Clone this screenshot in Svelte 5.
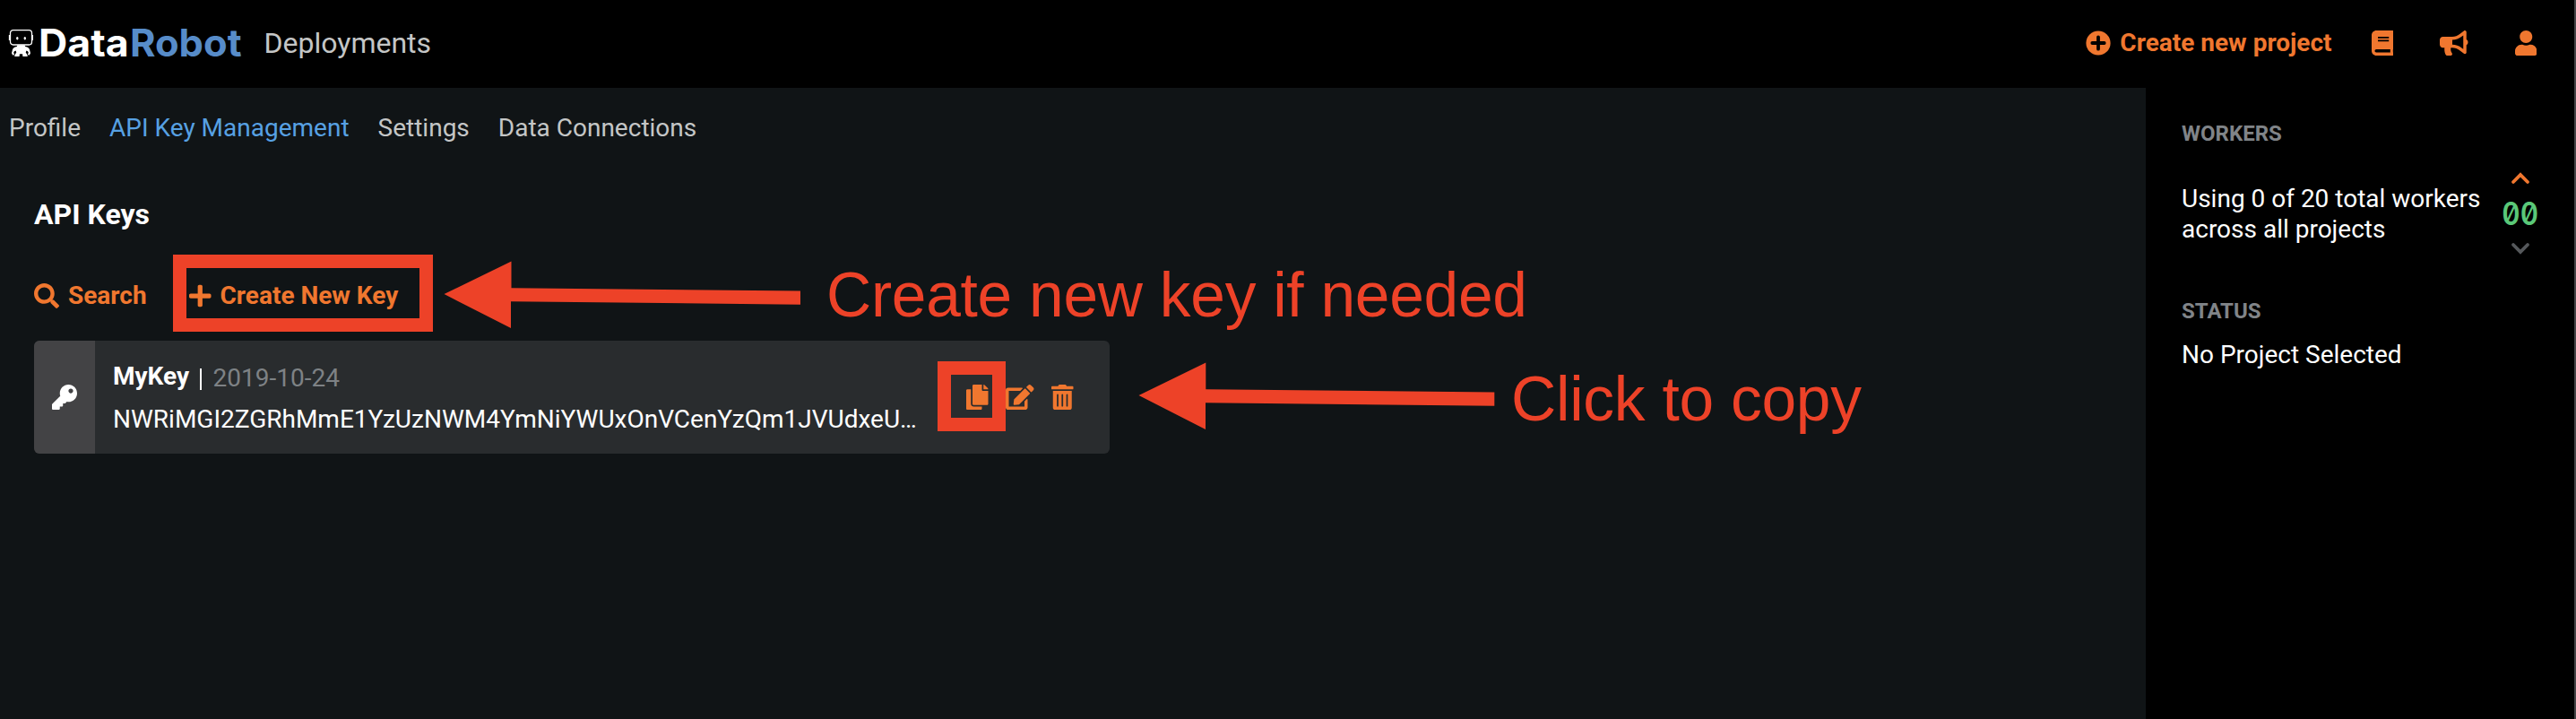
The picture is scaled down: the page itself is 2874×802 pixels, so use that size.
<script>
  const tabs = ['Profile', 'API Key Management', 'Settings', 'Data Connections'];
  const active = 'API Key Management';

  const icons = {
    book: { w: 448, d: 'M448 360V24c0-13.3-10.7-24-24-24H96C43 0 0 43 0 96v320c0 53 43 96 96 96h328c13.3 0 24-10.7 24-24v-16c0-7.5-3.5-14.3-8.9-18.7-4.2-15.4-4.2-59.3 0-74.7 5.4-4.3 8.9-11.1 8.9-18.6zM128 134c0-3.3 2.7-6 6-6h212c3.3 0 6 2.7 6 6v20c0 3.3-2.7 6-6 6H134c-3.3 0-6-2.7-6-6v-20zm0 64c0-3.3 2.7-6 6-6h212c3.3 0 6 2.7 6 6v20c0 3.3-2.7 6-6 6H134c-3.3 0-6-2.7-6-6v-20zm253.4 250H96c-17.7 0-32-14.3-32-32 0-17.6 14.4-32 32-32h285.4c-1.9 17.1-1.9 46.9 0 64z' },
    bullhorn: { w: 576, d: 'M576 240c0-23.63-12.95-44.04-32-55.12V32.01C544 23.26 537.02 0 512 0c-7.12 0-14.19 2.38-19.98 7.02l-85.03 68.03C364.28 109.19 310.66 128 256 128H64c-35.35 0-64 28.65-64 64v96c0 35.35 28.65 64 64 64h33.7c-1.39 10.48-2.18 21.14-2.18 32 0 39.77 9.26 77.35 25.56 110.94 5.19 10.69 16.52 17.06 28.4 17.06h74.28c26.05 0 41.69-29.84 25.9-50.56-16.4-21.52-26.15-48.36-26.15-77.44 0-11.11 1.62-21.79 4.41-32H256c54.66 0 108.28 18.81 150.98 52.95l85.03 68.03a32.023 32.023 0 0 0 19.98 7.02c24.92 0 32-22.78 32-32V295.13C563.05 284.04 576 263.63 576 240zm-96 141.42l-33.05-26.44C392.95 311.78 325.12 288 256 288v-96c69.12 0 136.95-23.78 190.95-66.98L480 98.58v282.84z' },
    user: { w: 448, d: 'M224 256c70.7 0 128-57.3 128-128S294.7 0 224 0 96 57.3 96 128s57.3 128 128 128zm89.6 32h-16.7c-22.2 10.2-46.9 16-72.9 16s-50.6-5.8-72.9-16h-16.7C60.2 288 0 348.2 0 422.4V464c0 26.5 21.5 48 48 48h352c26.5 0 48-21.5 48-48v-41.6c0-74.2-60.2-134.4-134.4-134.4z' },
    search: { w: 512, d: 'M505 442.7L405.3 343c-4.5-4.5-10.6-7-17-7H372c27.6-35.3 44-79.7 44-128C416 93.1 322.9 0 208 0S0 93.1 0 208s93.1 208 208 208c48.3 0 92.7-16.4 128-44v16.3c0 6.4 2.5 12.5 7 17l99.7 99.7c9.4 9.4 24.6 9.4 33.9 0l28.3-28.3c9.4-9.4 9.4-24.6.1-34zM208 336c-70.7 0-128-57.2-128-128 0-70.7 57.2-128 128-128 70.7 0 128 57.2 128 128 0 70.7-57.2 128-128 128z' },
    plus: { w: 448, d: 'M416 208H272V64c0-17.67-14.33-32-32-32h-32c-17.67 0-32 14.33-32 32v144H32c-17.67 0-32 14.33-32 32v32c0 17.67 14.33 32 32 32h144v144c0 17.67 14.33 32 32 32h32c17.67 0 32-14.33 32-32V304h144c17.67 0 32-14.33 32-32v-32c0-17.67-14.33-32-32-32z' },
    key: { w: 512, d: 'M512 176.001C512 273.203 433.202 352 336 352c-11.22 0-22.19-1.062-32.827-3.069l-24.012 27.014A23.999 23.999 0 0 1 261.223 384H224v40c0 13.255-10.745 24-24 24h-40v40c0 13.255-10.745 24-24 24H24c-13.255 0-24-10.745-24-24v-78.059c0-6.365 2.529-12.47 7.029-16.971l161.802-161.802C163.108 213.814 160 195.271 160 176 160 78.798 238.797.001 335.999 0 433.488-.001 512 78.511 512 176.001zM336 128c0 26.51 21.49 48 48 48s48-21.49 48-48-21.49-48-48-48-48 21.49-48 48z' },
    copy: { w: 448, d: 'M320 448v40c0 13.255-10.745 24-24 24H24c-13.255 0-24-10.745-24-24V120c0-13.255 10.745-24 24-24h72v296c0 30.879 25.121 56 56 56h168zm0-344V0H152c-13.255 0-24 10.745-24 24v368c0 13.255 10.745 24 24 24h272c13.255 0 24-10.745 24-24V128H344c-13.2 0-24-10.8-24-24zm120.971-31.029L375.029 7.029A24 24 0 0 0 358.059 0H352v96h96v-6.059a24 24 0 0 0-7.029-16.97z' },
    edit: { w: 576, d: 'M402.6 83.2l90.2 90.2c3.8 3.8 3.8 10 0 13.8L274.4 405.6l-92.8 10.3c-12.4 1.4-22.9-9.1-21.5-21.5l10.3-92.8L388.8 83.2c3.8-3.8 10-3.8 13.8 0zm162-22.9l-48.8-48.8c-15.2-15.2-39.9-15.2-55.2 0l-35.4 35.4c-3.8 3.8-3.8 10 0 13.8l90.2 90.2c3.8 3.8 10 3.8 13.8 0l35.4-35.4c15.2-15.3 15.2-40 0-55.2zM384 346.2V448H64V128h229.8c3.2 0 6.2-1.3 8.5-3.5l40-40c7.6-7.6 2.2-20.5-8.5-20.5H48C21.5 64 0 85.5 0 112v352c0 26.5 21.5 48 48 48h352c26.5 0 48-21.5 48-48V306.2c0-10.7-12.9-16-20.5-8.5l-40 40c-2.2 2.3-3.5 5.3-3.5 8.5z' },
    trash: { w: 448, d: 'M32 464a48 48 0 0 0 48 48h288a48 48 0 0 0 48-48V128H32zm272-256a16 16 0 0 1 32 0v224a16 16 0 0 1-32 0zm-96 0a16 16 0 0 1 32 0v224a16 16 0 0 1-32 0zm-96 0a16 16 0 0 1 32 0v224a16 16 0 0 1-32 0zM432 32H312l-9.4-18.7A24 24 0 0 0 281.1 0H166.8a23.72 23.72 0 0 0-21.4 13.3L136 32H16A16 16 0 0 0 0 48v32a16 16 0 0 0 16 16h416a16 16 0 0 0 16-16V48a16 16 0 0 0-16-16z' }
  };
</script>

{#snippet icon(name)}
  <svg class="icon" viewBox="0 0 {icons[name].w} 512" width={(icons[name].w * 28) / 512} height="28"><path d={icons[name].d} /></svg>
{/snippet}

<div class="page">
  <header>
    <div class="brand">
      <svg class="robot" viewBox="0 0 28 32" width="28" height="32">
        <rect x="2.500" y="1.600" width="24" height="16.400" rx="3.200" fill="none" stroke="#fff" stroke-width="1.300" />
        <path d="M1.600 7v6M27.400 7v6" stroke="#fff" stroke-width="1.500" />
        <ellipse cx="10.300" cy="10.700" rx="1.200" ry="1.700" fill="#fff" />
        <ellipse cx="18.800" cy="10.700" rx="1.200" ry="1.700" fill="#fff" />
        <path d="M10.500 18.300h8l.8 1.700c3 .3 4.700 2 5 4.500l.7 2.700-1.100 2.200-1.800-.2.200-1.600.6-.7-.8-1.700-1.700-.8-.7 2.200 1.700 2.300.4 2.100h-5.400l-.3-2.700h-3.200l-.3 2.700H7.200l.4-2.100 1.700-2.300-.7-2.200-1.700.8-.8 1.700.6.700.2 1.600-1.800.2L4 27.200l.7-2.700c.3-2.500 2-4.200 5-4.500z" fill="#fff" />
      </svg>
      <div class="wordmark"><span class="data">Data</span><span class="bot">Robot</span></div>
    </div>
    <nav class="section">Deployments</nav>
    <div class="tools">
      <div class="create">
        <svg viewBox="0 0 28 28" width="28" height="28">
          <circle cx="14" cy="14" r="13.600" fill="#f0772f" />
          <path d="M14 7.300v13.400M7.300 14h13.400" stroke="#000" stroke-width="3.800" stroke-linecap="round" />
        </svg>
        <span>Create new project</span>
      </div>
      {@render icon('book')}
      {@render icon('bullhorn')}
      {@render icon('user')}
    </div>
  </header>

  <div class="body">
    <main>
      <nav class="tabs">
        {#each tabs as tab}
          <span class:active={tab === active}>{tab}</span>
        {/each}
      </nav>
      <h1>API Keys</h1>
      <div class="actions">
        <span class="action search">{@render icon('search')}<b>Search</b></span>
        <span class="action">{@render icon('plus')}<b>Create New Key</b></span>
      </div>
      <section class="card">
        <div class="badge">{@render icon('key')}</div>
        <div class="info">
          <div class="line"><b>MyKey</b><i></i><span class="date">2019-10-24</span></div>
          <div class="line value">NWRiMGI2ZGRhMmE1YzUzNWM4YmNiYWUxOnVCenYzQm1JVUdxeU…</div>
        </div>
        <div class="ops">
          {@render icon('copy')}
          {@render icon('edit')}
          {@render icon('trash')}
        </div>
      </section>
    </main>

    <aside>
      <h2>WORKERS</h2>
      <div class="workers">
        <p>Using 0 of 20 total workers<br />across all projects</p>
        <div class="stepper">
          <svg viewBox="0 0 22 14" width="22" height="14"><path d="M3 11l8-8 8 8" stroke="#f0772f" /></svg>
          <span class="count">00</span>
          <svg viewBox="0 0 22 14" width="22" height="14"><path d="M3 3l8 8 8-8" stroke="#55585b" /></svg>
        </div>
      </div>
      <h2>STATUS</h2>
      <p class="status">No Project Selected</p>
    </aside>
  </div>

  <svg class="notes" viewBox="0 0 2874 802" width="2874" height="802">
    <rect x="200.500" y="291.500" width="275" height="71" />
    <rect x="1053.500" y="410.500" width="61" height="63" />
    <path d="M495.500 328L570.500 291.500V321.300L893 324.500V339.700L570 336.300V366z" />
    <path d="M1270.500 441L1345.300 404.500V434.300L1667.300 437.500V452.700L1345 449.300V479z" />
    <text x="922" y="353" textLength="782">Create new key if needed</text>
    <text x="1686" y="469" textLength="391">Click to copy</text>
  </svg>
</div>

<style>
  :global(body) { background: #000; overflow: hidden; }
  .page { position: relative; width: 2874px; height: 802px; box-sizing: border-box; border-right: 2px solid #444446; background: #000; color: #fff; font: 28px/40px Roboto, sans-serif; display: flex; flex-direction: column; overflow: hidden; }
  .icon { fill: #f0772f; display: block; flex: none; }
  header { height: 98px; display: flex; align-items: center; flex: none; }
  .brand { display: flex; align-items: center; width: 294.500px; padding-left: 9px; padding-bottom: 2px; box-sizing: border-box; }
  .robot { margin-right: 6px; }
  .wordmark { font: bold 42px/42px Inter, sans-serif; display: flex; }
  .data { width: 101.500px; transform: scaleX(1.063); transform-origin: left; }
  .bot { color: #578cc9; transform: scaleX(1.034); transform-origin: left; }
  .section { font-size: 32px; color: #c4c6c6; padding-bottom: 3px; }
  .tools { margin-left: auto; display: flex; align-items: center; padding-right: 42px; padding-bottom: 3px; }
  .create { display: flex; align-items: center; gap: 10px; color: #f0772f; font-weight: 700; margin-right: 44px; }
  .tools .icon { margin-right: 52px; }
  .tools .icon:last-child { margin-right: 0; }
  .body { flex: 1; display: flex; min-height: 0; }
  main { width: 2394px; background: #101416; }
  .tabs { height: 90px; display: flex; align-items: center; gap: 32px; padding-left: 10px; color: #c4c6c6; }
  .tabs .active { color: #57a1e3; }
  h1 { margin: 31px 0 0 38px; font-size: 32px; line-height: 40px; font-weight: 700; }
  .actions { margin: 51px 0 0 38px; height: 40px; display: flex; align-items: center; color: #f0772f; }
  .action { display: flex; align-items: center; gap: 10px; }
  .search { width: 173px; }
  .card { margin: 30px 0 0 38px; width: 1200px; height: 126px; border-radius: 6px; overflow: hidden; background: #292c2e; display: flex; }
  .badge { width: 68px; background: #434345; display: flex; align-items: center; justify-content: center; }
  .badge .icon { fill: #fff; }
  .info { padding: 16px 0 0 20px; width: 932px; box-sizing: border-box; white-space: nowrap; }
  .line { height: 48px; line-height: 48px; display: flex; align-items: center; }
  .line i { width: 2px; height: 24px; background: #fff; margin: 5px 12.500px 0 12px; }
  .date { color: #7e8285; padding-top: 3px; }
  .ops { display: flex; align-items: center; margin-left: 40px; gap: 19.500px; }
  aside { padding: 31px 0 0 40px; width: 438px; box-sizing: border-box; }
  h2 { margin: 0; font-size: 24px; line-height: 40px; font-weight: 700; color: #808488; }
  p { margin: 0; line-height: 34px; white-space: nowrap; }
  .workers { display: flex; height: 158px; }
  .workers p { padding-top: 36px; width: 354px; flex: none; }
  .stepper { display: flex; flex-direction: column; align-items: center; padding-top: 23px; width: 48px; margin-left: 1px; }
  .stepper svg { fill: none; stroke-width: 3.800; stroke-linecap: round; flex: none; }
  .count { font: 600 35px/64px Inter, sans-serif; font-feature-settings: "zero", "tnum"; color: #5ac878; transform: scaleX(0.9); }
  .status { padding-top: 12px; }
  .notes { position: absolute; left: 0; top: 0; fill: #ed4228; }
  .notes rect { fill: none; stroke: #ed4228; stroke-width: 15; }
  .notes text { font: 69.500px "Liberation Sans", Arial, sans-serif; }
</style>
